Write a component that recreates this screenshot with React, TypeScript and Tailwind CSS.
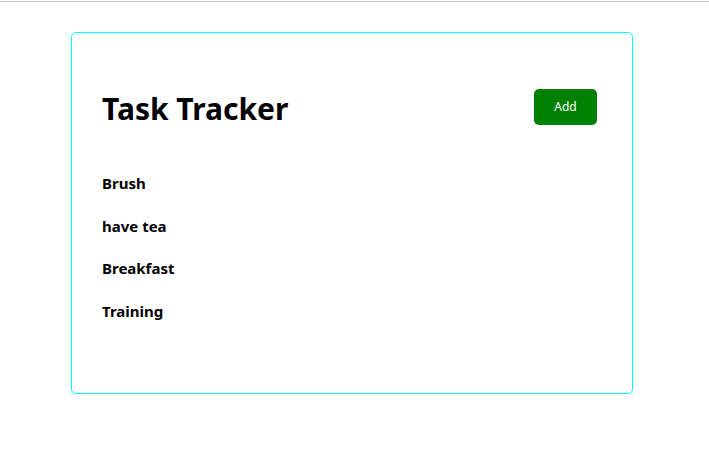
const tasks = ["Brush", "have tea", "Breakfast", "Training"];

export default function App() {
  return (
    <div className="min-h-[450px] bg-white font-['Noto_Sans','Open_Sans',sans-serif] text-black">
      <div className="h-px" />
      <div className="h-px bg-[#c4c4c4]" />
      <div className="ml-[71px] mt-[30px] box-border min-h-[362px] w-[562px] rounded-[5px] border border-[#00ffff] p-[30px]">
        <header className="flex h-[88px] items-center justify-between">
          <h1 className="mt-[3px] text-[30px] font-bold leading-none">Task Tracker</h1>
          <button className="m-[5px] h-[36px] w-[63px] rounded-[5px] bg-[#008000] text-[12px] text-white">
            Add
          </button>
        </header>
        <div className="mt-[20px] flex flex-col">
          {tasks.map((t) => (
            <h3 key={t} className="h-[42.5px] text-[15px] font-bold leading-[24px]">
              {t}
            </h3>
          ))}
        </div>
      </div>
    </div>
  );
}
